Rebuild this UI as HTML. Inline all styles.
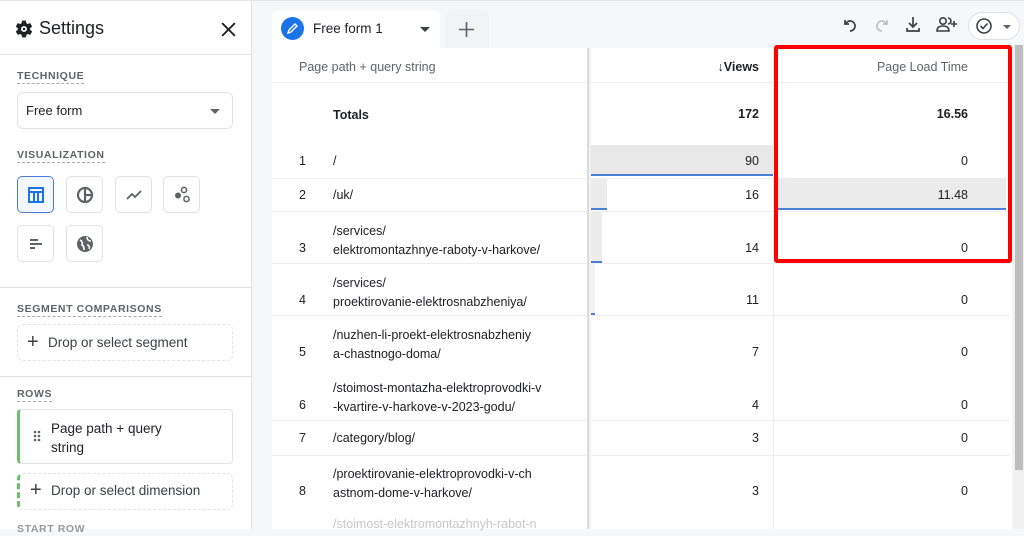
<!DOCTYPE html>
<html><head><meta charset="utf-8"><style>
*{box-sizing:border-box;margin:0;padding:0}
body{width:1024px;height:529px;overflow:hidden;background:#f6f7f8;font-family:"Liberation Sans",Arial,sans-serif;color:#202124;position:relative}
.a{position:absolute}
.side{left:0;top:0;width:252px;height:529px;background:#fff;border-right:1px solid #e0e0e0;border-top:1px solid #e8e8e8}
.lbl{font-size:10.5px;letter-spacing:.6px;color:#5f6368;border-bottom:1px dashed #aaa;padding-bottom:1px;font-weight:bold}
.box{border:1px solid #e3e3e3;border-radius:6px;background:#fff}
.ib{width:37px;height:37px;border:1px solid #e3e3e3;border-radius:5px;background:#fff;display:flex;align-items:center;justify-content:center}
.t{font-size:13px;color:#202124}
.num{font-size:12.5px;text-align:right}
.hl{height:1px;background:#eceef0}
</style></head><body>
<div class="a side">
 <svg class="a" style="left:14px;top:18px" width="20" height="20" viewBox="0 0 24 24"><path fill="#202124" d="M19.4 13c.04-.32.06-.66.06-1s-.02-.68-.07-1l2.1-1.650c.2-.15.24-.42.12-.64l-2-3.46c-.12-.22-.39-.3-.61-.22l-2.49 1c-.52-.4-1.080-.73-1.690-.98l-.38-2.650A.49.49 0 0 0 14 2h-4c-.25 0-.46.18-.49.42l-.38 2.65c-.61.25-1.17.59-1.69.98l-2.49-1c-.23-.09-.49 0-.61.22l-2 3.46c-.13.22-.07.49.12.64L4.57 11c-.04.32-.07.65-.07 1s.02.68.07 1l-2.11 1.65c-.19.15-.24.42-.12.64l2 3.46c.12.22.39.3.61.22l2.49-1c.52.4 1.08.73 1.69.98l.38 2.65c.03.24.24.42.49.42h4c.25 0 .46-.18.49-.42l.38-2.65c.61-.25 1.17-.59 1.69-.98l2.49 1c.23.09.49 0 .61-.22l2-3.46c.12-.22.07-.49-.12-.64L19.4 13zM12 15.5c-1.93 0-3.5-1.57-3.5-3.5s1.57-3.5 3.5-3.5 3.5 1.57 3.5 3.5-1.57 3.5-3.5 3.5zm0-5a1.5 1.5 0 1 0 0 3 1.5 1.5 0 0 0 0-3z" fill-rule="evenodd"/></svg>
 <div class="a" style="left:39px;top:17px;font-size:18px">Settings</div>
 <svg class="a" style="left:220px;top:20px" width="17" height="17" viewBox="0 0 16 16"><path d="M2 2L14 14M14 2L2 14" stroke="#202124" stroke-width="1.8"/></svg>
 <div class="a hl" style="left:0;top:53px;width:252px;background:#e0e0e0"></div>
 <div class="a lbl" style="left:17px;top:69px">TECHNIQUE</div>
 <div class="a box" style="left:17px;top:91px;width:216px;height:37px"></div>
 <div class="a t" style="left:26px;top:102px">Free form</div>
 <div class="a" style="left:210px;top:108px;border:5px solid transparent;border-top:5px solid #5f6368;border-bottom:0"></div>
 <div class="a lbl" style="left:17px;top:148px">VISUALIZATION</div>
 <div class="a ib" style="left:17px;top:175px;border-color:#4a7fd6;background:#f3f7ff"><svg width="18" height="18" viewBox="0 0 18 18"><rect x="2" y="2" width="14" height="14" fill="none" stroke="#1a73e8" stroke-width="2"/><path d="M2 6H16M7 6V16M11 6V16" stroke="#1a73e8" stroke-width="2"/></svg></div>
 <div class="a ib" style="left:66px;top:175px"><svg width="20" height="20" viewBox="0 0 20 20"><circle cx="10" cy="10" r="7" fill="none" stroke="#5f6368" stroke-width="2.2"/><path d="M10 3V17M10 10H17" stroke="#5f6368" stroke-width="2.2"/></svg></div>
 <div class="a ib" style="left:115px;top:175px"><svg width="20" height="20" viewBox="0 0 20 20"><path d="M3 14L8 9L11 12L17 6" fill="none" stroke="#5f6368" stroke-width="1.8"/></svg></div>
 <div class="a ib" style="left:163px;top:175px"><svg width="20" height="20" viewBox="0 0 20 20"><circle cx="12" cy="5" r="2.6" fill="none" stroke="#5f6368" stroke-width="1.5"/><circle cx="6" cy="10.5" r="3" fill="#5f6368"/><circle cx="14.5" cy="14" r="2.6" fill="none" stroke="#5f6368" stroke-width="1.5"/></svg></div>
 <div class="a ib" style="left:17px;top:224px"><svg width="18" height="18" viewBox="0 0 18 18"><path d="M3 5H11M3 9H15M3 13H8" stroke="#5f6368" stroke-width="2"/></svg></div>
 <div class="a ib" style="left:66px;top:224px"><svg width="20" height="20" viewBox="0 0 20 20"><circle cx="10" cy="10" r="8" fill="#5f6368"/><path d="M5 6C7 7 8 9 7 11C9 12 9 14 9 16M12 3C12 6 14 7 16 7M12 11C14 11 15 13 14 15" stroke="#fff" stroke-width="1.6" fill="none"/></svg></div>
 <div class="a hl" style="left:0;top:286px;width:252px;background:#e0e0e0"></div>
 <div class="a lbl" style="left:17px;top:302px">SEGMENT COMPARISONS</div>
 <div class="a box" style="left:17px;top:323px;width:216px;height:37px;border-style:dashed"></div>
 <div class="a" style="left:27px;top:330px;font-size:20px;color:#3c4043;font-weight:300">+</div>
 <div class="a" style="left:48px;top:334px;font-size:13.5px;color:#3c4043">Drop or select segment</div>
 <div class="a hl" style="left:0;top:375px;width:252px;background:#e0e0e0"></div>
 <div class="a lbl" style="left:17px;top:387px">ROWS</div>
 <div class="a box" style="left:17px;top:408px;width:216px;height:55px;border-left:3px solid #6abf69;border-radius:4px"></div>
 <svg class="a" style="left:33px;top:429px" width="8" height="12"><g fill="#5f6368"><circle cx="2" cy="2" r="1.3"/><circle cx="6" cy="2" r="1.3"/><circle cx="2" cy="6" r="1.3"/><circle cx="6" cy="6" r="1.3"/><circle cx="2" cy="10" r="1.3"/><circle cx="6" cy="10" r="1.3"/></g></svg>
 <div class="a" style="left:51px;top:418px;font-size:13.5px;line-height:19px;color:#202124">Page path + query<br>string</div>
 <div class="a box" style="left:17px;top:472px;width:216px;height:37px;border-style:dashed;border-left:3px dashed #6abf69"></div>
 <div class="a" style="left:30px;top:478px;font-size:20px;color:#3c4043;font-weight:300">+</div>
 <div class="a" style="left:51px;top:482px;font-size:13.5px;color:#3c4043">Drop or select dimension</div>
 <div class="a lbl" style="left:17px;top:522px;border:0;color:#999">START ROW</div>
</div>
<div class="a" style="left:252px;top:0;width:772px;height:1px;background:#e3e3e3"></div>
<div class="a" style="left:272px;top:10px;width:168px;height:40px;background:#fff;border-radius:8px 8px 0 0"></div>
<div class="a" style="left:281px;top:17px;width:23px;height:23px;border-radius:50%;background:#1a73e8"></div>
<svg class="a" style="left:286px;top:22px" width="13" height="13" viewBox="0 0 13 13"><path d="M2 11L3 8L9 2L11 4L5 10Z" fill="none" stroke="#fff" stroke-width="1.4"/></svg>
<div class="a" style="left:313px;top:21px;font-size:13.5px;color:#202124">Free form 1</div>
<div class="a" style="left:420px;top:27px;border:5px solid transparent;border-top:5px solid #3c4043;border-bottom:0"></div>
<div class="a" style="left:445px;top:10px;width:44px;height:38px;background:#f1f3f4;border-radius:8px 8px 0 0"></div>
<svg class="a" style="left:458px;top:21px" width="17" height="17"><path d="M8.5 1V16M1 8.5H16" stroke="#5f6368" stroke-width="1.6"/></svg>
<svg class="a" style="left:841px;top:16px" width="18" height="18" viewBox="0 0 18 18"><path d="M4 4V8H8M4.5 8A5 5 0 1 1 9 15" fill="none" stroke="#3c4043" stroke-width="1.7"/></svg>
<svg class="a" style="left:873px;top:16px" width="18" height="18" viewBox="0 0 18 18"><path d="M14 4V8H10M13.5 8A5 5 0 1 0 9 15" fill="none" stroke="#bdc1c6" stroke-width="1.7"/></svg>
<svg class="a" style="left:904px;top:15px" width="18" height="18" viewBox="0 0 18 18"><path d="M9 2V12M5 8L9 12L13 8M3 13V16H15V13" fill="none" stroke="#3c4043" stroke-width="1.7"/></svg>
<svg class="a" style="left:935px;top:15px" width="24" height="18" viewBox="0 0 24 18"><circle cx="8" cy="6" r="3.2" fill="none" stroke="#3c4043" stroke-width="1.6"/><path d="M2 16C2 12 5 11 8 11S14 12 14 16Z" fill="none" stroke="#3c4043" stroke-width="1.6"/><path d="M13 3A3 3 0 0 1 13 9M19 6V12M16 9H22" fill="none" stroke="#3c4043" stroke-width="1.6"/></svg>
<div class="a" style="left:968px;top:12px;width:52px;height:28px;border:1px solid #e0e0e0;border-radius:14px;background:#fff"></div>
<svg class="a" style="left:975px;top:17px" width="18" height="18" viewBox="0 0 18 18"><circle cx="9" cy="9" r="7" fill="none" stroke="#3c4043" stroke-width="1.6"/><path d="M5.5 9L8 11.5L12.5 6.5" fill="none" stroke="#3c4043" stroke-width="1.6"/></svg>
<div class="a" style="left:1003px;top:25px;border:4px solid transparent;border-top:4px solid #5f6368;border-bottom:0"></div>
<div class="a" style="left:272px;top:48px;width:740px;height:481px;background:#fff"></div>
<div class="a" style="left:1013px;top:45px;width:11px;height:484px;background:#f1f1f1"></div>
<div class="a" style="left:1015px;top:45px;width:8px;height:425px;background:#bdbdbd"></div>
<div class="a" style="left:588px;top:145px;width:185px;height:30px;background:#e8e8e8"></div>
<div class="a" style="left:588px;top:174px;width:185px;height:2px;background:#4a7fd6"></div>
<div class="a" style="left:588px;top:178px;width:19px;height:30px;background:#ececec"></div>
<div class="a" style="left:588px;top:208px;width:19px;height:2px;background:#4a7fd6"></div>
<div class="a" style="left:588px;top:211px;width:14px;height:50px;background:#ececec"></div>
<div class="a" style="left:588px;top:261px;width:14px;height:2px;background:#4a7fd6"></div>
<div class="a" style="left:588px;top:263px;width:7px;height:50px;background:#f2f2f2"></div>
<div class="a" style="left:588px;top:313px;width:7px;height:2px;background:#4a7fd6"></div>
<div class="a" style="left:778px;top:178px;width:228px;height:30px;background:#ebebeb"></div>
<div class="a" style="left:778px;top:208px;width:228px;height:2px;background:#4a7fd6"></div>
<div class="a hl" style="left:272px;top:82px;width:738px"></div>
<div class="a hl" style="left:272px;top:178px;width:738px"></div>
<div class="a hl" style="left:272px;top:211px;width:738px"></div>
<div class="a hl" style="left:272px;top:263px;width:738px"></div>
<div class="a hl" style="left:272px;top:315px;width:738px"></div>
<div class="a hl" style="left:272px;top:420px;width:738px"></div>
<div class="a hl" style="left:272px;top:455px;width:738px"></div>
<div class="a" style="left:773px;top:48px;width:1px;height:481px;background:#ececec"></div>
<div class="a" style="left:587px;top:48px;width:2px;height:481px;background:#dcdcdc"></div>
<div class="a" style="left:589px;top:48px;width:2px;height:481px;background:#f2f2f2"></div>
<div class="a" style="left:299px;top:60px;font-size:12.5px;color:#5f6368">Page path + query string</div>
<div class="a" style="left:700px;top:60px;width:59px;font-size:12.5px;font-weight:bold;text-align:right">↓Views</div>
<div class="a" style="left:840px;top:60px;width:128px;font-size:12.5px;color:#5f6368;text-align:right">Page Load Time</div>
<div class="a" style="left:333px;top:108px;font-size:12.5px;font-weight:bold">Totals</div>
<div class="a num" style="left:700px;top:107px;width:59px;font-weight:bold">172</div>
<div class="a num" style="left:880px;top:107px;width:88px;font-weight:bold">16.56</div>
<div class="a" style="left:299px;top:154px;font-size:12.5px">1</div><div class="a" style="left:333px;top:154px;font-size:12.5px">/</div>
<div class="a" style="left:299px;top:188px;font-size:12.5px">2</div><div class="a" style="left:333px;top:188px;font-size:12.5px">/uk/</div>
<div class="a" style="left:333px;top:222px;font-size:12.5px;line-height:19px">/services/<br>elektromontazhnye-raboty-v-harkove/</div><div class="a" style="left:299px;top:241px;font-size:12.5px">3</div>
<div class="a" style="left:333px;top:274px;font-size:12.5px;line-height:19px">/services/<br>proektirovanie-elektrosnabzheniya/</div><div class="a" style="left:299px;top:293px;font-size:12.5px">4</div>
<div class="a" style="left:333px;top:326px;font-size:12.5px;line-height:19px">/nuzhen-li-proekt-elektrosnabzheniy<br>a-chastnogo-doma/</div><div class="a" style="left:299px;top:345px;font-size:12.5px">5</div>
<div class="a" style="left:333px;top:379px;font-size:12.5px;line-height:19px">/stoimost-montazha-elektroprovodki-v<br>-kvartire-v-harkove-v-2023-godu/</div><div class="a" style="left:299px;top:398px;font-size:12.5px">6</div>
<div class="a" style="left:299px;top:431px;font-size:12.5px">7</div><div class="a" style="left:333px;top:431px;font-size:12.5px">/category/blog/</div>
<div class="a" style="left:333px;top:465px;font-size:12.5px;line-height:19px">/proektirovanie-elektroprovodki-v-ch<br>astnom-dome-v-harkove/</div><div class="a" style="left:299px;top:484px;font-size:12.5px">8</div>
<div class="a" style="left:333px;top:517px;font-size:12.5px;color:#c8c8c8">/stoimost-elektromontazhnyh-rabot-n</div>
<div class="a num" style="left:700px;top:154px;width:59px">90</div>
<div class="a num" style="left:700px;top:188px;width:59px">16</div>
<div class="a num" style="left:700px;top:241px;width:59px">14</div>
<div class="a num" style="left:700px;top:293px;width:59px">11</div>
<div class="a num" style="left:700px;top:345px;width:59px">7</div>
<div class="a num" style="left:700px;top:398px;width:59px">4</div>
<div class="a num" style="left:700px;top:431px;width:59px">3</div>
<div class="a num" style="left:700px;top:484px;width:59px">3</div>
<div class="a num" style="left:880px;top:154px;width:88px">0</div>
<div class="a num" style="left:880px;top:188px;width:88px">11.48</div>
<div class="a num" style="left:880px;top:241px;width:88px">0</div>
<div class="a num" style="left:880px;top:293px;width:88px">0</div>
<div class="a num" style="left:880px;top:345px;width:88px">0</div>
<div class="a num" style="left:880px;top:398px;width:88px">0</div>
<div class="a num" style="left:880px;top:431px;width:88px">0</div>
<div class="a num" style="left:880px;top:484px;width:88px">0</div>
<div class="a" style="left:774px;top:45px;width:238px;height:218px;border:4.5px solid #f00;border-radius:3px"></div>
</body></html>
